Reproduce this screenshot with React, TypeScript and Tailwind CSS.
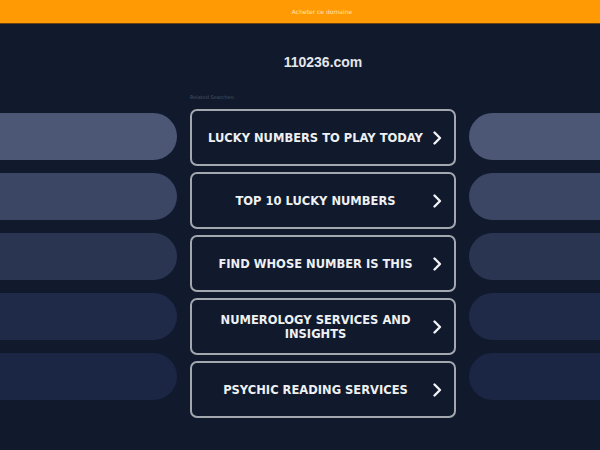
import React from "react";

const links = [
  "LUCKY NUMBERS TO PLAY TODAY",
  "TOP 10 LUCKY NUMBERS",
  "FIND WHOSE NUMBER IS THIS",
  "NUMEROLOGY SERVICES AND INSIGHTS",
  "PSYCHIC READING SERVICES",
];

const pillTones = ["bg-[#4b5775]", "bg-[#3a4664]", "bg-[#2a3552]", "bg-[#1f2a48]", "bg-[#1b2644]"];

function Chevron() {
  return (
    <svg width="16" height="16" viewBox="0 0 16 16" className="shrink-0">
      <path d="M5.5 2.5 L11 8 L5.5 13.5" fill="none" stroke="#f1f3f5" strokeWidth="2.4" strokeLinecap="round" strokeLinejoin="round" />
    </svg>
  );
}

export default function App() {
  return (
    <div className="w-[600px] h-[450px] overflow-hidden bg-[#111a2d] flex flex-col" style={{ fontFamily: '"DejaVu Sans", Verdana, sans-serif' }}>
      <div className="h-[24px] shrink-0 bg-[#ff9a05] border-b border-[#6b4311] flex items-center justify-center">
        <span className="text-[6px] leading-none text-[#ffe2b8] pl-[44px]">Acheter ce domaine</span>
      </div>
      <div className="flex-1 flex gap-[13px]">
        <div className="flex-1 overflow-hidden pt-[89px] flex flex-col gap-[13px]">
          {pillTones.map((c) => (
            <div key={c} className={`h-[47px] -ml-[40px] rounded-full ${c}`} />
          ))}
        </div>
        <div className="w-[266px] shrink-0 flex flex-col">
          <div className="mt-[28px] h-[20px] text-center text-[14px] leading-[20px] font-bold text-[#e4e6ea]" style={{ fontFamily: '"Liberation Sans", Arial, sans-serif' }}>110236.com</div>
          <div className="mt-[21px] h-[8px] text-[5px] leading-[8px] text-[#4a5366]">Related Searches:</div>
          <div className="mt-[8px] flex flex-col gap-[6px]">
            {links.map((t) => (
              <div key={t} className="h-[57px] rounded-[7px] border-2 border-[#a3a7ae] flex items-center pl-[10px] pr-[9px]">
                <span className="flex-1 text-center text-[11.5px] leading-[14px] font-bold text-[#eef0f3]">{t}</span>
                <Chevron />
              </div>
            ))}
          </div>
        </div>
        <div className="w-[131px] shrink-0 overflow-hidden pt-[89px] flex flex-col gap-[13px]">
          {pillTones.map((c) => (
            <div key={c} className={`h-[47px] w-[200px] rounded-full ${c}`} />
          ))}
        </div>
      </div>
    </div>
  );
}
